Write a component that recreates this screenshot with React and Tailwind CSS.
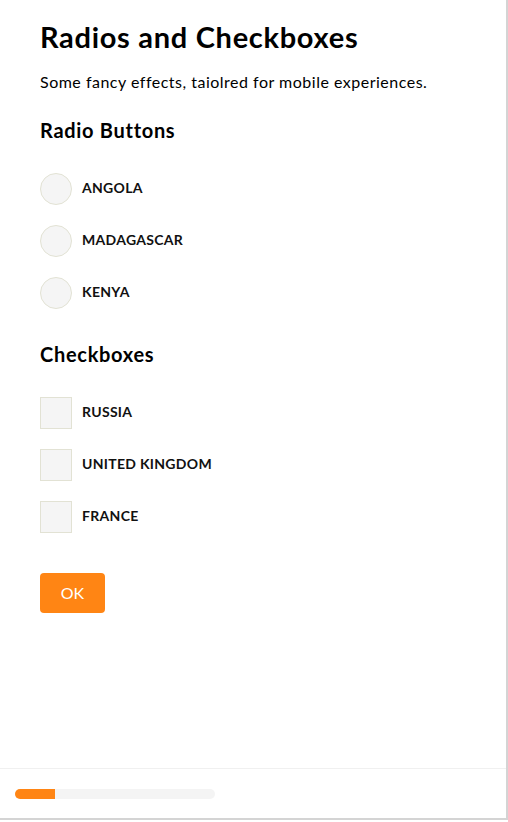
export default function App() {
  const radios = ["ANGOLA", "MADAGASCAR", "KENYA"];
  const checks = ["RUSSIA", "UNITED KINGDOM", "FRANCE"];
  return (
    <div className="w-[508px] h-[822px] bg-white overflow-hidden flex" style={{ fontFamily: "Lato, 'Open Sans', sans-serif" }}>
      <div className="w-[508px] h-[820px] border-r-2 border-b-2 border-[#d4d4d4] flex flex-col text-black">
        <div className="flex-1 pl-10">
          <h1 className="mt-[19px] text-[29px] leading-[36px] font-bold tracking-[0.7px]">Radios and Checkboxes</h1>
          <p className="mt-[15px] text-[16px] leading-[24px] font-normal tracking-[0.5px]">Some fancy effects, taiolred for mobile experiences.</p>
          <h2 className="mt-[22px] text-[20px] leading-[28px] font-bold tracking-[0.7px]">Radio Buttons</h2>
          <div className="mt-[29px] flex flex-col gap-5">
            {radios.map((r) => (
              <label key={r} className="flex items-center gap-[10px]">
                <span className="w-8 h-8 rounded-full bg-[#f5f5f5] border border-[#e2e2d4]" />
                <span className="text-[14px] font-bold tracking-[0.3px] pb-[4px] text-[#111]">{r}</span>
              </label>
            ))}
          </div>
          <h2 className="mt-[31px] text-[20px] leading-[28px] font-bold tracking-[0.7px]">Checkboxes</h2>
          <div className="mt-[29px] flex flex-col gap-5">
            {checks.map((r) => (
              <label key={r} className="flex items-center gap-[10px]">
                <span className="w-8 h-8 bg-[#f5f5f5] border border-[#e2e2d4]" />
                <span className="text-[14px] font-bold tracking-[0.3px] pb-[4px] text-[#111]">{r}</span>
              </label>
            ))}
          </div>
          <button className="mt-10 w-[65px] h-10 rounded-[4px] bg-[#ff8514] text-white text-[16px] font-normal">OK</button>
        </div>
        <div className="h-[50px] border-t border-[#f0f0f0] pl-[15px] pt-[20px]">
          <div className="w-[200px] h-[10px] rounded-full bg-[#f4f4f4] overflow-hidden">
            <div className="w-[40px] h-full bg-[#ff8514]" />
          </div>
        </div>
      </div>
    </div>
  );
}
